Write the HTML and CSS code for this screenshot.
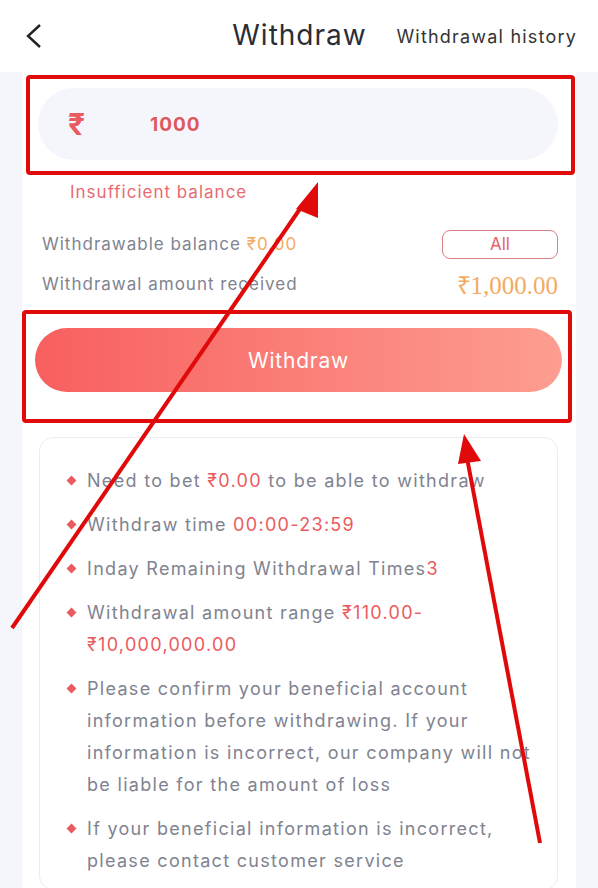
FILE: index.html
```html
<!DOCTYPE html>
<html lang="en">
<head>
    <meta charset="UTF-8">
    <meta name="viewport" content="width=device-width, initial-scale=1.0">
    <title>Withdraw</title>
    <link rel="stylesheet" href="styles.css">
</head>
<body>
    <header class="topo">
        <div class="voltar">
            <svg width="16" height="24" viewBox="0 0 16 24"><polyline points="14,1 2,12 14,23" fill="none" stroke="#222" stroke-width="2.4"/></svg>
        </div>
        <h1 class="titulo">Withdraw</h1>
        <a class="historico">Withdrawal history</a>
    </header>

    <main class="saque">
        <div class="valor">
            <span class="rupia">₹</span>
            <span class="numero">1000</span>
        </div>
        <p class="erro">Insufficient balance</p>

        <div class="linha">
            <span>Withdrawable balance <em class="laranja">₹0.00</em></span>
            <button class="tudo">All</button>
        </div>
        <div class="linha">
            <span>Withdrawal amount received</span>
            <span class="recebido">₹1,000.00</span>
        </div>

        <button class="sacar">Withdraw</button>

        <ul class="regras">
            <li>Need to bet <em>₹0.00</em> to be able to withdraw</li>
            <li>Withdraw time <em>00:00-23:59</em></li>
            <li>Inday Remaining Withdrawal Times<em>3</em></li>
            <li>Withdrawal amount range <em>₹110.00-₹10,000,000.00</em></li>
            <li>Please confirm your beneficial account information before withdrawing. If your information is incorrect, our company will not be liable for the amount of loss</li>
            <li>If your beneficial information is incorrect, please contact customer service</li>
        </ul>
    </main>

    <!-- marcacoes vermelhas por cima do print -->
    <svg class="marcas" width="598" height="888" viewBox="0 0 598 888">
        <g fill="none" stroke="#e00a0a" stroke-width="4">
            <rect x="28" y="77" width="545" height="96" rx="2"/>
            <rect x="24" y="312" width="546" height="109" rx="2"/>
            <line x1="12" y1="628" x2="304" y2="203"/>
            <line x1="540" y1="843" x2="467" y2="458"/>
        </g>
        <g fill="#e00a0a">
            <polygon points="318,182 296,209 318,218"/>
            <polygon points="464,434 458,464 481,461"/>
        </g>
    </svg>
</body>
</html>
```

FILE: styles.css
```css
body {
    font-family: Inter, "Noto Sans", sans-serif;
    margin: 0;
    height: 888px;
    overflow: hidden;
    background-color: #f5f6fb;
    color: #808390;
    position: relative;
}

.topo {
    display: grid;
    grid-template-columns: 1fr auto 1fr;
    align-items: center;
    height: 72px;
    background-color: #fff;
    padding: 0 21px 0 26px;
}

.voltar {
    display: flex;
    align-items: center;
}

.titulo {
    margin: 0 4px 2px 0;
    font-size: 28px;
    font-weight: 400;
    letter-spacing: 1px;
    color: #2a2d37;
}

.historico {
    justify-self: end;
    font-size: 18px;
    letter-spacing: 1.2px;
    color: #333;
}

.saque {
    background-color: #fff;
    margin: 0 22px;
    padding: 16px 18px 0 16px;
    height: 800px;
}

.valor {
    display: flex;
    align-items: center;
    height: 72px;
    border-radius: 36px;
    background-color: #f5f6fb;
    padding-left: 30px;
}

.rupia {
    font-size: 30px;
    font-weight: 700;
    color: #ea5b60;
    width: 82px;
}

.numero {
    font-size: 19px;
    font-weight: 700;
    letter-spacing: 1px;
    color: #e0585e;
}

.erro {
    margin: 22px 0 0 32px;
    font-size: 17px;
    color: #ea6a70;
    letter-spacing: 1px;
}

.linha {
    display: flex;
    justify-content: space-between;
    align-items: center;
    height: 40px;
    padding-left: 4px;
    font-size: 17px;
    letter-spacing: 1px;
}

.erro + .linha {
    margin-top: 22px;
}

em {
    font-style: normal;
    color: #ea5b60;
}

.laranja {
    color: #f3ab62;
}

.tudo {
    width: 116px;
    height: 29px;
    border: 1px solid #d98187;
    border-radius: 8px;
    background: #fff;
    color: #e8606a;
    font-family: inherit;
    font-size: 17px;
}

.recebido {
    font-family: "Liberation Serif", serif;
    font-size: 25px;
    letter-spacing: 0;
    color: #f3ab62;
}

.sacar {
    display: block;
    width: calc(100% + 7px);
    margin: 24px 0 0 -3px;
    height: 64px;
    border: none;
    border-radius: 32px;
    background: linear-gradient(90deg, #f85f5f, #fd9e90);
    color: #fff;
    font-family: inherit;
    font-size: 21px;
    letter-spacing: 0.8px;
}

.regras {
    list-style: none;
    margin: 45px 0 0 1px;
    padding: 27px 26px 0 47px;
    border: 1px solid #ececf0;
    border-radius: 14px;
    font-size: 18px;
    line-height: 32px;
    letter-spacing: 1.3px;
}

.regras li {
    position: relative;
    margin-bottom: 12px;
}

.regras li::before {
    content: "";
    position: absolute;
    left: -19px;
    top: 12px;
    width: 7px;
    height: 7px;
    background-color: #ea5b60;
    transform: rotate(45deg);
}

.marcas {
    position: absolute;
    top: 0;
    left: 0;
    pointer-events: none;
}
```
